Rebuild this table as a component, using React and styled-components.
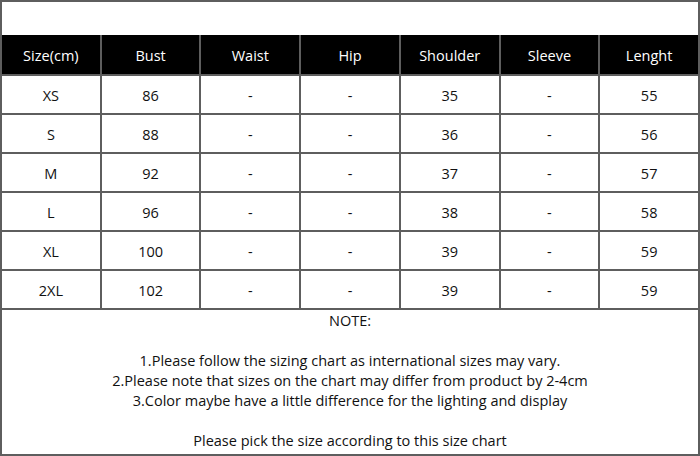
import styled, { createGlobalStyle } from "styled-components"

const GlobalStyle = createGlobalStyle`
    html, body {
        margin: 0;
        padding: 0;
        background: #fff;
    }
`

const Frame = styled.div`
    width: 700px;
    height: 456px;
    box-sizing: border-box;
    border: 2px solid #5e5e5e;
    display: flex;
    flex-direction: column;
    font-family: "Open Sans", "Noto Sans", sans-serif;
    color: #111;
    background: #fff;
`
const TopSpace = styled.div`
    height: 33px;
    flex-shrink: 0;
`
const Grid = styled.div`
    display: grid;
    grid-template-columns: repeat(7, 1fr);
    grid-template-rows: 39px repeat(6, 37px);
    gap: 2px;
    padding-bottom: 2px;
    background: #5e5e5e;
    flex-shrink: 0;
`
const Cell = styled.div`
    display: flex;
    align-items: center;
    justify-content: center;
    padding-top: 2px;
    font-size: 14.5px;
    background: ${props => props.$head ? '#000' : '#fff'};
    color: ${props => props.$head ? '#fff' : '#111'};
`
const Notes = styled.div`
    flex: 1;
    padding-top: 1px;
    text-align: center;
    font-size: 14.5px;
    line-height: 20px;
`
const NoteLine = styled.div`
    height: 20px;
`

const headers = ['Size(cm)', 'Bust', 'Waist', 'Hip', 'Shoulder', 'Sleeve', 'Lenght']
const rows = [
    ['XS', '86', '-', '-', '35', '-', '55'],
    ['S', '88', '-', '-', '36', '-', '56'],
    ['M', '92', '-', '-', '37', '-', '57'],
    ['L', '96', '-', '-', '38', '-', '58'],
    ['XL', '100', '-', '-', '39', '-', '59'],
    ['2XL', '102', '-', '-', '39', '-', '59'],
]
const notes = [
    'NOTE:',
    '',
    '1.Please follow the sizing chart as international sizes may vary.',
    '2.Please note that sizes on the chart may differ from product by 2-4cm',
    '3.Color maybe have a little difference for the lighting and display',
    '',
    'Please pick the size according to this size chart',
]

const App = () => {
    return (
        <>
            <GlobalStyle />
            <Frame>
                <TopSpace />
                <Grid>
                    {headers.map(h => (
                        <Cell key={h} $head>{h}</Cell>
                    ))}
                    {rows.map((r, i) =>
                        r.map((v, j) => <Cell key={`${i}-${j}`}>{v}</Cell>)
                    )}
                </Grid>
                <Notes>
                    {notes.map((n, i) => (
                        <NoteLine key={i}>{n}</NoteLine>
                    ))}
                </Notes>
            </Frame>
        </>
    )
}

export default App
